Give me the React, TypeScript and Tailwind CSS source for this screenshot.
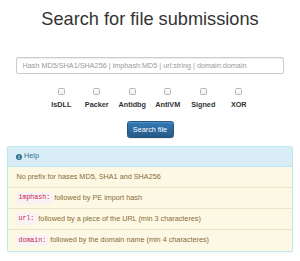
import React from "react";

const labels = ["IsDLL", "Packer", "Antidbg", "AntiVM", "Signed", "XOR"];

function Code({ children }: { children: React.ReactNode }) {
  return (
    <code
      className="rounded-[2px] bg-[#f9f2f4] px-[2px] py-[1px] text-[#c7254e] text-[6.6px]"
      style={{ fontFamily: '"Liberation Mono", "DejaVu Sans Mono", monospace' }}
    >
      {children}
    </code>
  );
}

export default function App() {
  return (
    <div
      className="w-[300px] h-[261px] bg-white text-[#333] overflow-hidden"
      style={{ fontFamily: '"Liberation Sans", Arial, sans-serif' }}
    >
      <h1 className="pt-[9px] text-center text-[18.2px] leading-[20px] font-normal text-[#333]">
        Search for file submissions
      </h1>

      <div className="mt-[27.5px] px-[16px] flex">
        <input
          type="text"
          placeholder="Hash MD5/SHA1/SHA256 | imphash:MD5 | url:string | domain:domain"
          className="block w-[268px] h-[17px] rounded-[2px] border border-[#ccc] bg-white pl-[5.5px] text-[7.25px] text-[#555] placeholder:text-[#999] shadow-[inset_0_1px_1px_rgba(0,0,0,0.075)] outline-none"
        />
      </div>

      <div className="mt-[14.5px] flex justify-center">
        {labels.map((l) => (
          <div key={l} className="w-[35.5px] flex flex-col items-center">
            <div className="w-[7px] h-[7px] rounded-[1.5px] border border-[#b5b5b5] bg-gradient-to-b from-white to-[#f0f0f0]" />
            <div className="mt-[5px] text-[7.25px] leading-[10px] font-bold text-[#333]">{l}</div>
          </div>
        ))}
      </div>

      <div className="mt-[11px] flex justify-center">
        <button className="w-[47px] h-[17px] rounded-[2.5px] border border-[#245580] bg-gradient-to-b from-[#337ab7] to-[#265a88] text-white text-[7.25px] leading-none shadow-[inset_0_1px_0_rgba(255,255,255,0.15),0_1px_1px_rgba(0,0,0,0.075)]">
          Search file
        </button>
      </div>

      <div className="mx-[7px] mt-[8px] rounded-[2px] border border-[#bce8f1] shadow-[0_1px_2px_rgba(0,0,0,0.05)] overflow-hidden">
        <div className="h-[20px] bg-[#d9edf7] border-b border-[#bce8f1] flex items-center pl-[8px] text-[#31708f] text-[7.25px]">
          <span className="w-[6px] h-[6px] rounded-full bg-[#31708f] text-white text-[5px] leading-[6px] font-bold flex items-center justify-center mr-[2px]">
            i
          </span>
          Help
        </div>
        <div className="bg-[#fcf8e3] text-[#8a6d3b] text-[7.25px]">
          <div className="h-[21px] flex items-center pl-[8.5px] border-b border-[#ebe3c8]">
            No prefix for hases MD5, SHA1 and SHA256
          </div>
          <div className="h-[21px] flex items-center pl-[8.5px] border-b border-[#ebe3c8] whitespace-pre">
            <Code>imphash:</Code> followed by PE import hash
          </div>
          <div className="h-[21px] flex items-center pl-[8.5px] border-b border-[#ebe3c8] whitespace-pre">
            <Code>url:</Code> followed by a piece of the URL (min 3 characteres)
          </div>
          <div className="h-[21px] flex items-center pl-[8.5px] whitespace-pre">
            <Code>domain:</Code> followed by the domain name (min 4 characteres)
          </div>
        </div>
      </div>
    </div>
  );
}
